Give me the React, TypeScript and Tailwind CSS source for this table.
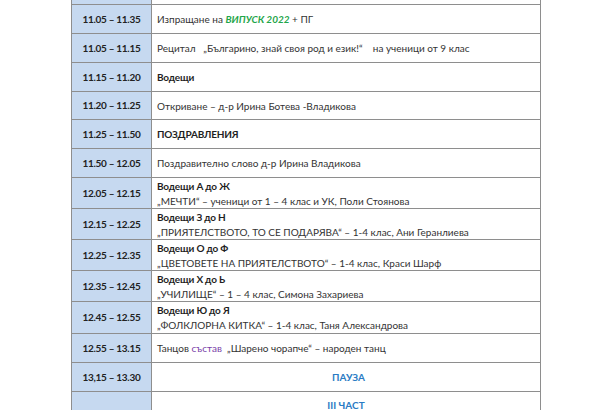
import React from "react"

type Row = {
	time: string
	h: string
	content: React.ReactNode
}

const Lead = ({ children }: { children: React.ReactNode }) => (
	<span className="font-bold text-[#1f1f1f] tracking-[-0.2px]">{children}</span>
)

const rows: Row[] = [
	{ time: "", h: "h-[29px]", content: null },
	{
		time: "11.05 – 11.35",
		h: "h-[29px]",
		content: (
			<span>
				Изпращане на <span className="font-bold italic text-[#1fa64a]">ВИПУСК 2022</span> + ПГ
			</span>
		),
	},
	{
		time: "11.05 – 11.15",
		h: "h-[29px]",
		content: <span>Рецитал   „Българино, знай своя род и език!“    на ученици от 9 клас</span>,
	},
	{ time: "11.15 – 11.20", h: "h-[29px]", content: <Lead>Водещи</Lead> },
	{
		time: "11.20 – 11.25",
		h: "h-[28px]",
		content: <span>Откриване – д-р Ирина Ботева -Владикова</span>,
	},
	{ time: "11.25 – 11.50", h: "h-[29px]", content: <Lead>ПОЗДРАВЛЕНИЯ</Lead> },
	{
		time: "11.50 – 12.05",
		h: "h-[29px]",
		content: <span>Поздравително слово д-р Ирина Владикова</span>,
	},
]

const pairs: [string, string, string, string][] = [
	["12.05 – 12.15", "h-[31px]", "Водещи А до Ж", "„МЕЧТИ“ – ученици от 1 – 4 клас и УК, Поли Стоянова"],
	["12.15 – 12.25", "h-[31px]", "Водещи З до Н", "„ПРИЯТЕЛСТВОТО, ТО СЕ ПОДАРЯВА“ – 1-4 клас, Ани Геранлиева"],
	["12.25 – 12.35", "h-[31px]", "Водещи О до Ф", "„ЦВЕТОВЕТЕ НА ПРИЯТЕЛСТВОТО“ – 1-4 клас, Краси Шарф"],
	["12.35 – 12.45", "h-[31px]", "Водещи Х до Ь", "„УЧИЛИЩЕ“ – 1 – 4 клас, Симона Захариева"],
	["12.45 – 12.55", "h-[32px]", "Водещи Ю до Я", "„ФОЛКЛОРНА КИТКА“ – 1-4 клас, Таня Александрова"],
]

function TableRow({ time, h, children, center }: { time: string; h: string; children?: React.ReactNode; center?: boolean }) {
	return (
		<div className={`flex ${h} border-b border-[#8e8e8e]`}>
			<div className="w-[80px] shrink-0 bg-[#c6d9f0] border-r border-[#8e8e8e] flex items-center justify-center font-bold text-[10px] tracking-[-0.3px] text-[#222]">
				{time}
			</div>
			<div className={`flex-1 flex flex-col justify-center pl-[5px] text-[10px] text-[#333] leading-[14px] whitespace-pre ${center ? "items-center" : ""}`}>
				{children}
			</div>
		</div>
	)
}

export default function App() {
	return (
		<div className="w-[590px] h-[410px] overflow-hidden bg-white" style={{ fontFamily: "Lato, 'Open Sans', sans-serif" }}>
			{/* schedule table, first row cut off by the top edge */}
			<div className="ml-[71px] w-[470px] mt-[-24px] border-l border-r border-[#8e8e8e]">
				{rows.map((r, i) => (
					<TableRow key={i} time={r.time} h={r.h}>
						{r.content}
					</TableRow>
				))}

				{pairs.map(([time, h, lead, text]) => (
					<TableRow key={time} time={time} h={h}>
						<Lead>{lead}</Lead>
						<span className="mt-[1px]">{text}</span>
					</TableRow>
				))}

				<TableRow time="12.55 – 13.15" h="h-[29px]">
					<span>
						Танцов <span className="text-[#7a3fa8]">състав</span>  „Шарено чорапче“ – народен танц
					</span>
				</TableRow>
				<TableRow time="13,15 – 13.30" h="h-[29px]" center>
					<span className="font-bold text-[#2a7bc4]">ПАУЗА</span>
				</TableRow>
				<div className="flex h-[29px] border-b border-[#8e8e8e]">
					<div className="w-[80px] shrink-0 bg-[#c6d9f0] border-r border-[#8e8e8e]" />
					<div className="flex-1 flex justify-center pt-[6px] text-[10px] leading-[14px]">
						<span className="font-bold text-[#2a7bc4]">III ЧАСТ</span>
					</div>
				</div>
			</div>
		</div>
	)
}
